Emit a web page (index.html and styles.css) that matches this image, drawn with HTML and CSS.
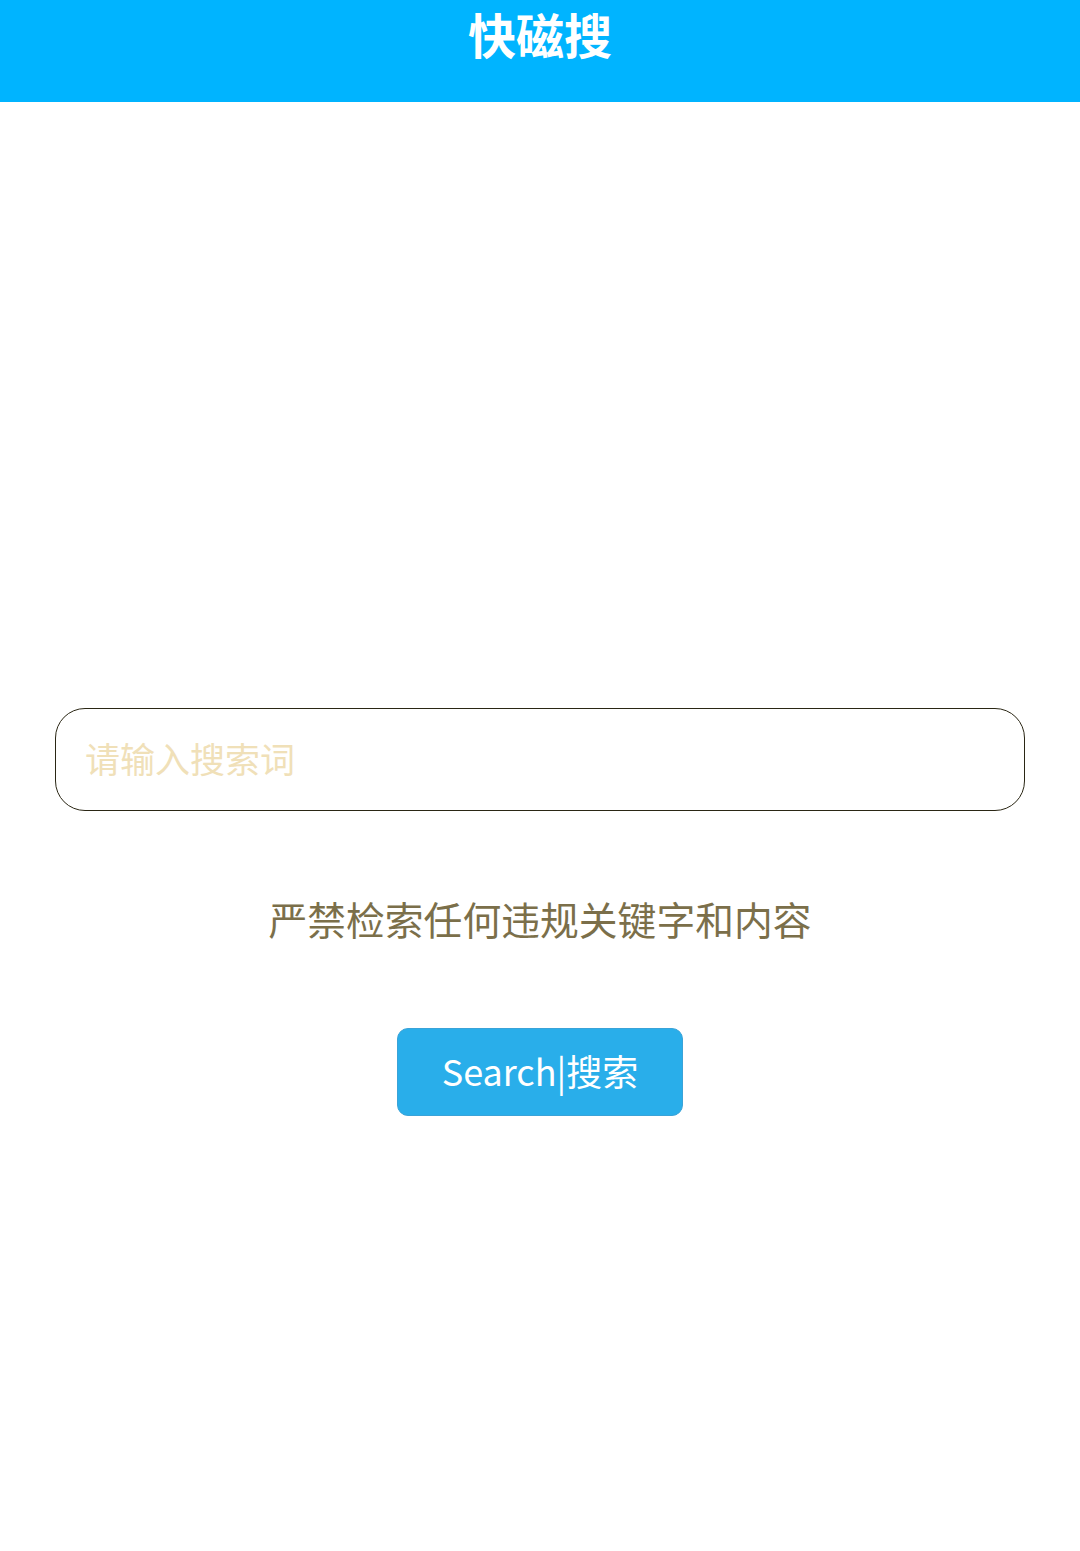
FILE: index.html
```html
<!DOCTYPE html>
<html lang="zh-CN">
<head>
<meta charset="utf-8">
<title>快磁搜</title>
<link rel="stylesheet" href="styles.css">
</head>
<body>
<header class="topbar"><h1 class="title">快磁搜</h1></header>
<main class="main">
  <div class="search-box"><span class="placeholder">请输入搜索词</span></div>
  <p class="notice">严禁检索任何违规关键字和内容</p>
  <button class="btn" type="button">Search|搜索</button>
</main>
</body>
</html>
```
FILE: styles.css
```css
html, body { margin: 0; padding: 0; background: #fff; }
body {
  width: 1080px;
  height: 1551px;
  font-family: "Noto Sans CJK SC", "Noto Sans", sans-serif;
}
.topbar {
  height: 102px;
  background: #00b4ff;
  display: flex;
  justify-content: center;
}
.title {
  margin: 0;
  padding-top: 1px;
  color: #fff;
  font-size: 48px;
  line-height: 64px;
  font-weight: 700;
}
.main {
  display: flex;
  flex-direction: column;
  align-items: center;
  padding-top: 606px;
}
.search-box {
  box-sizing: border-box;
  width: 970px;
  height: 103px;
  border: 1.5px solid #2a2614;
  border-radius: 30px;
  display: flex;
  align-items: center;
  padding-left: 29px;
}
.placeholder {
  color: #f0e0b8;
  font-size: 35px;
  line-height: 40px;
  margin-top: -3px;
}
.notice {
  margin: 83px 0 0;
  color: #7b6f4a;
  font-size: 38.8px;
  line-height: 48px;
}
.btn {
  margin-top: 86px;
  box-sizing: border-box;
  width: 286px;
  height: 88px;
  background: #29aeea;
  border: 1.5px solid #3aa3d8;
  border-radius: 11px;
  color: #fff;
  font-family: "Noto Sans CJK SC", sans-serif;
  font-size: 36px;
  line-height: 44px;
  padding: 0 0 4px;
}
```
